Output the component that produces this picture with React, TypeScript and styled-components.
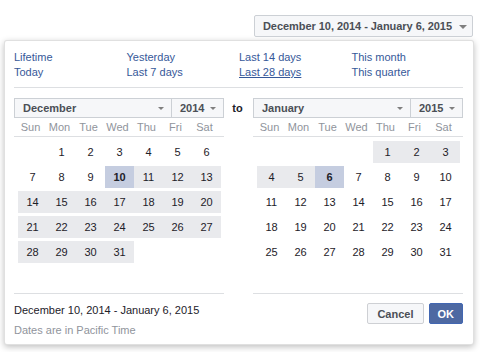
import React from "react"
import styled, { createGlobalStyle } from "styled-components"

const GlobalStyle = createGlobalStyle`
    html, body {
        margin: 0;
        padding: 0;
        background: #fff;
    }
    body {
        font-family: "Liberation Sans", Arial, sans-serif;
        font-size: 11px;
        color: #1d2129;
    }
`

const Page = styled.div`
    width: 480px;
    height: 352px;
    padding-top: 15px;
    box-sizing: border-box;
    overflow: hidden;
`

const TopBar = styled.div`
    display: flex;
    justify-content: flex-end;
    padding-right: 7px;
`

const RangeButton = styled.div`
    display: flex;
    align-items: center;
    gap: 7px;
    height: 22px;
    box-sizing: border-box;
    padding: 0 5px 0 8px;
    border: 1px solid #ccd0d5;
    border-radius: 2px;
    background: #f6f7f9;
    color: #4b4f56;
    font-weight: bold;
    font-size: 11px;
    letter-spacing: -0.05px;
`

const Caret = styled.span<{ $size?: number }>`
    width: 0;
    height: 0;
    border-left: ${p => p.$size ?? 4}px solid transparent;
    border-right: ${p => p.$size ?? 4}px solid transparent;
    border-top: ${p => p.$size ?? 4}px solid #7f7f7f;
    margin-top: 1px;
`

const Popup = styled.div`
    margin: 3px 6px 0 4px;
    height: 305px;
    box-sizing: border-box;
    background: #fff;
    border: 1px solid rgba(0, 0, 0, .12);
    border-radius: 3px;
    box-shadow: 0 2px 6px rgba(0, 0, 0, .25);
    padding: 9px 10px 0 9px;
`

const Presets = styled.div`
    display: grid;
    grid-template-columns: repeat(4, 112.5px);
    grid-auto-rows: 15px;
    padding-bottom: 7px;
    border-bottom: 1px solid #dddfe2;
    a {
        color: #365899;
        text-decoration: none;
        line-height: 15px;
        font-size: 11px;
        &.active {
            text-decoration: underline;
        }
    }
`

const Calendars = styled.div`
    display: flex;
    align-items: flex-start;
    margin-top: 10px;
`

const CalendarCol = styled.div`
    width: 210px;
    display: flex;
    flex-direction: column;
`

const ToLabel = styled.div`
    width: 31px;
    text-align: center;
    font-weight: bold;
    line-height: 20px;
    color: #1d2129;
    padding-right: 2px;
    box-sizing: border-box;
`

const Selects = styled.div`
    display: flex;
    height: 20px;
`

const Select = styled.div<{ $width: number }>`
    width: ${p => p.$width}px;
    box-sizing: border-box;
    height: 20px;
    display: flex;
    align-items: center;
    justify-content: space-between;
    padding: 0 7px 0 8px;
    border: 1px solid #ccd0d5;
    background: #f6f7f9;
    color: #4b4f56;
    font-weight: bold;
    & + & {
        border-left: none;
    }
`

const WeekHead = styled.div`
    display: grid;
    grid-template-columns: repeat(7, 29px);
    padding-left: 2px;
    height: 18px;
    line-height: 18px;
    border-bottom: 1px solid #dddfe2;
    color: #90949c;
    span {
        text-align: center;
    }
`

const Days = styled.div`
    display: grid;
    grid-template-columns: repeat(7, 29px);
    grid-auto-rows: 22px;
    row-gap: 3px;
    padding: 4px 0 0 4px;
    height: 122px;
`

const Day = styled.div<{ $kind?: "range" | "selected" }>`
    display: flex;
    align-items: center;
    justify-content: center;
    font-size: 11px;
    color: #1d2129;
    background: ${p => p.$kind === "selected" ? "#c5cde0" : p.$kind === "range" ? "#e9eaed" : "transparent"};
    font-weight: ${p => p.$kind === "selected" ? "bold" : "normal"};
`

const Footer = styled.div`
    margin-top: 30px;
    border-top: 1px solid #dddfe2;
    height: 50px;
    display: flex;
    flex-direction: column;
`

const RangeText = styled.div`
    margin-top: 8px;
    line-height: 16px;
    color: #1d2129;
    font-size: 11px;
`

const Note = styled.div`
    margin-top: 4px;
    line-height: 16px;
    color: #90949c;
`

const Actions = styled.div`
    display: flex;
    justify-content: flex-end;
    gap: 5px;
    margin-top: 9px;
`

const Button = styled.div<{ $primary?: boolean }>`
    height: 21px;
    box-sizing: border-box;
    padding: 0 ${p => p.$primary ? 8 : 9}px;
    display: flex;
    align-items: center;
    font-weight: bold;
    font-size: 11px;
    border: 1px solid ${p => p.$primary ? "#4267b2" : "#ced0d4"};
    background: ${p => p.$primary ? "#4e69a2" : "#f6f7f9"};
    color: ${p => p.$primary ? "#fff" : "#4b4f56"};
    border-radius: 2px;
`

const weekdays = ["Sun", "Mon", "Tue", "Wed", "Thu", "Fri", "Sat"]

type DayKind = "range" | "selected" | undefined

const buildDays = (offset: number, count: number, kindOf: (d: number) => DayKind) => {
    const cells: { d: number | null; kind?: DayKind }[] = []
    for (let i = 0; i < offset; i++) cells.push({ d: null })
    for (let d = 1; d <= count; d++) cells.push({ d, kind: kindOf(d) })
    return cells
}

const decDays = buildDays(1, 31, d => d === 10 ? "selected" : d > 10 ? "range" : undefined)
const janDays = buildDays(4, 31, d => d === 6 ? "selected" : d < 6 ? "range" : undefined)

const Calendar = ({ month, year, cells, footer }: {
    month: string
    year: string
    cells: { d: number | null; kind?: DayKind }[]
    footer: React.ReactNode
}) => (
    <CalendarCol>
        <Selects>
            <Select $width={158}>{month}<Caret $size={3.5} /></Select>
            <Select $width={52}>{year}<Caret $size={3.5} /></Select>
        </Selects>
        <WeekHead>
            {weekdays.map(w => <span key={w}>{w}</span>)}
        </WeekHead>
        <Days>
            {cells.map((c, i) => <Day key={i} $kind={c.kind}>{c.d ?? ""}</Day>)}
        </Days>
        <Footer>{footer}</Footer>
    </CalendarCol>
)

export default function App() {
    return (
        <Page>
            <GlobalStyle />
            <TopBar>
                <RangeButton>
                    December 10, 2014 - January 6, 2015
                    <Caret />
                </RangeButton>
            </TopBar>
            <Popup>
                <Presets>
                    <a>Lifetime</a>
                    <a>Yesterday</a>
                    <a>Last 14 days</a>
                    <a>This month</a>
                    <a>Today</a>
                    <a>Last 7 days</a>
                    <a className="active">Last 28 days</a>
                    <a>This quarter</a>
                </Presets>
                <Calendars>
                    <Calendar
                        month="December"
                        year="2014"
                        cells={decDays}
                        footer={<>
                            <RangeText>December 10, 2014 - January 6, 2015</RangeText>
                            <Note>Dates are in Pacific Time</Note>
                        </>}
                    />
                    <ToLabel>to</ToLabel>
                    <Calendar
                        month="January"
                        year="2015"
                        cells={janDays}
                        footer={<Actions>
                            <Button>Cancel</Button>
                            <Button $primary>OK</Button>
                        </Actions>}
                    />
                </Calendars>
            </Popup>
        </Page>
    )
}
